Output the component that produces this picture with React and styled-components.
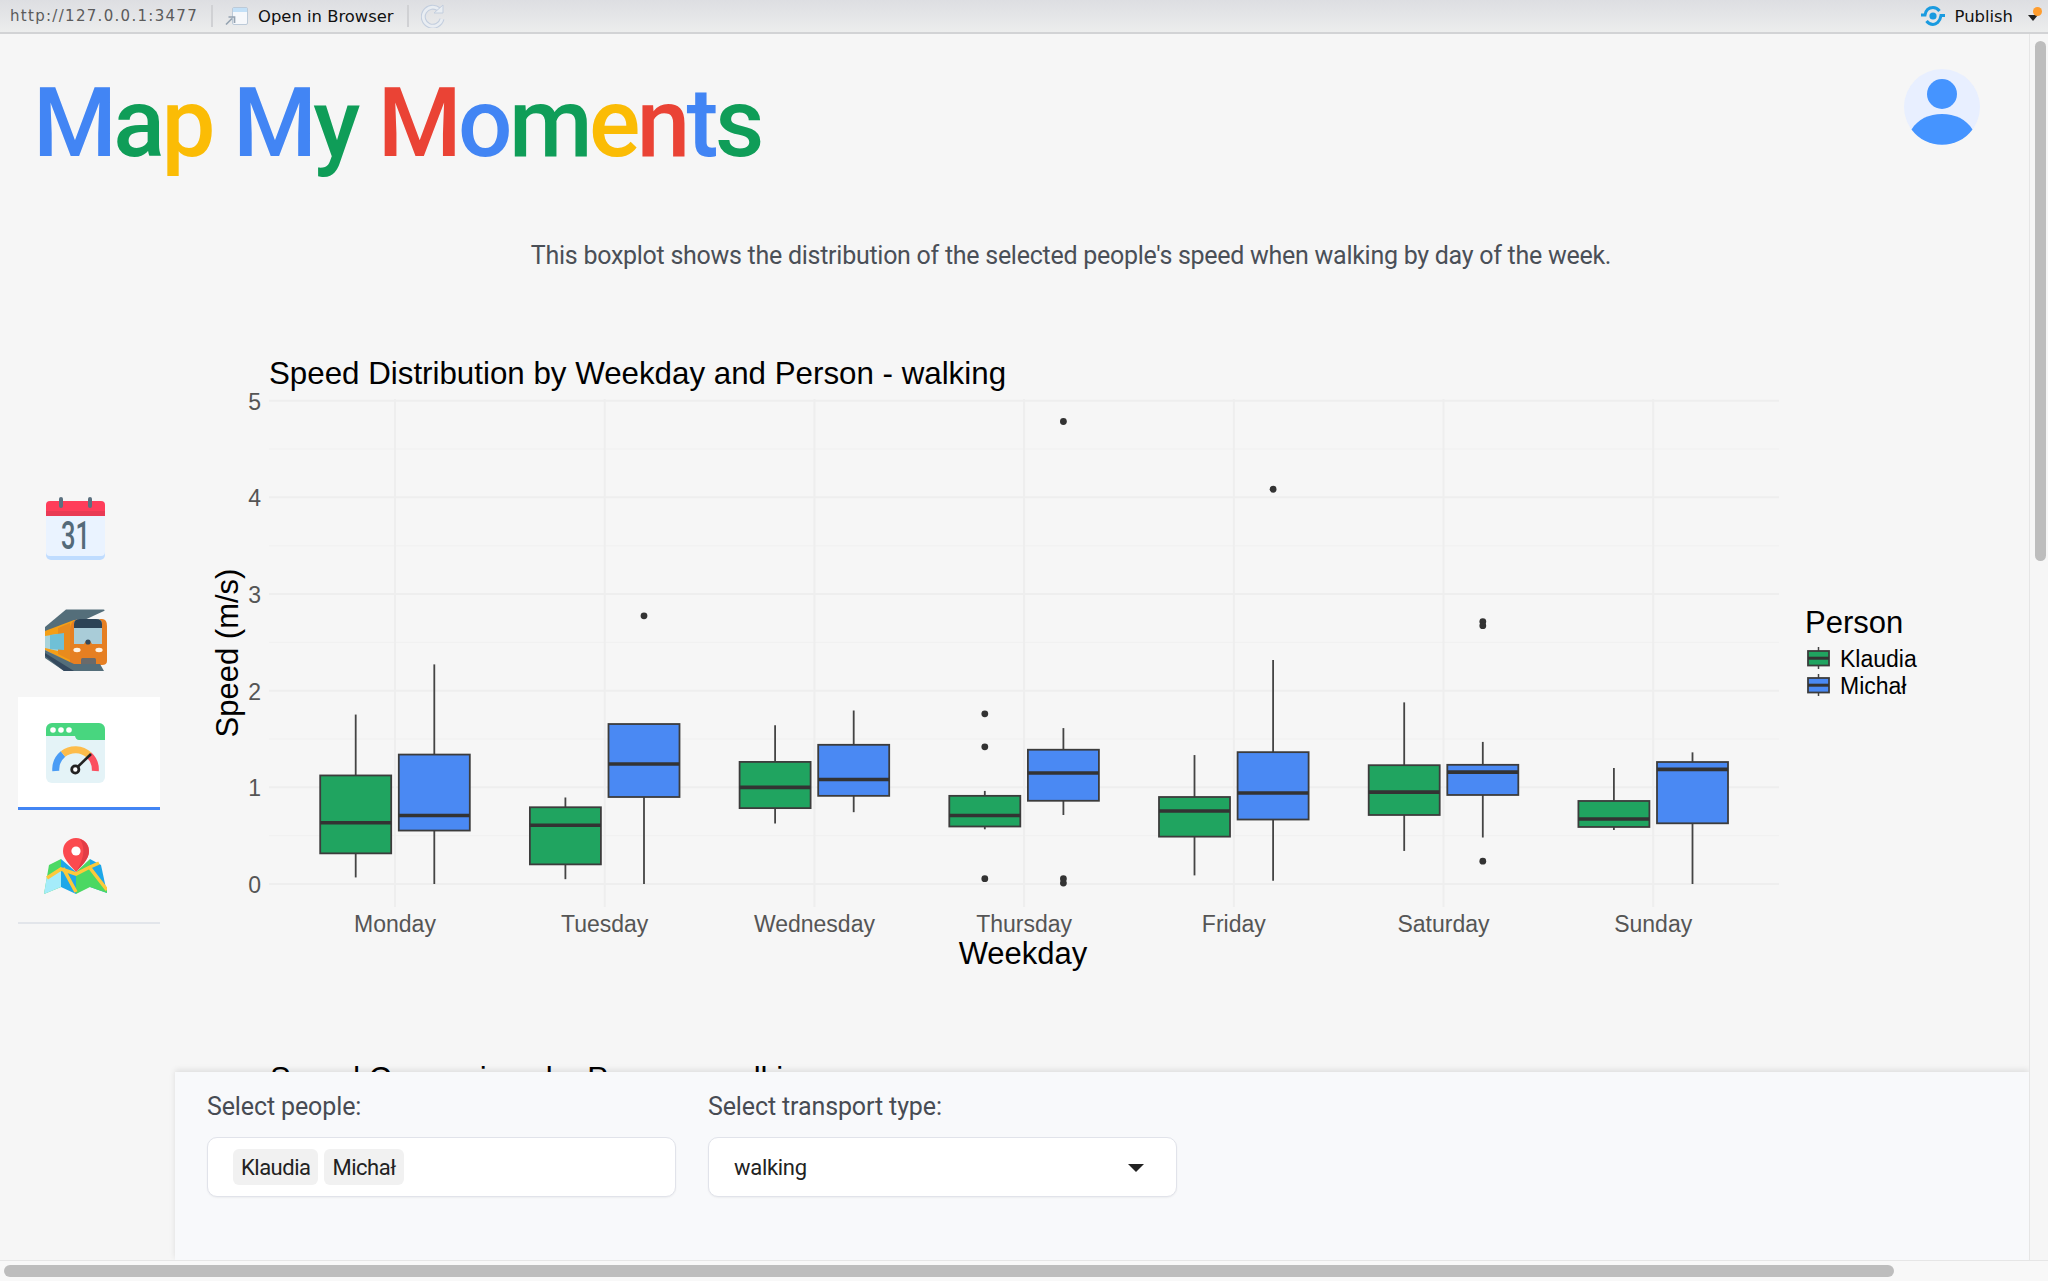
import React from 'react';
import styled, { createGlobalStyle } from 'styled-components';

const GlobalStyle = createGlobalStyle`
  html, body {
    margin: 0;
    padding: 0;
    background: #f6f6f6;
    overflow: hidden;
  }
`;

const BLUE = '#4285f4';
const GREEN = '#0f9d58';
const YELLOW = '#fbbc05';
const RED = '#ea4335';

const TITLE_WORDS = [
  [['M', BLUE], ['a', GREEN], ['p', YELLOW]],
  [['M', BLUE], ['y', GREEN]],
  [['M', RED], ['o', BLUE], ['m', GREEN], ['e', YELLOW], ['n', RED], ['t', BLUE], ['s', GREEN]],
];

// speed values: top whisker, q3, median, q1, bottom whisker, outliers
const DAYS = [
  { name: 'Monday', k: [1.753, 1.123, 0.633, 0.317, 0.068], m: [2.272, 1.339, 0.709, 0.553, 0] },
  { name: 'Tuesday', k: [0.895, 0.794, 0.608, 0.203, 0.05], m: [1.655, 1.655, 1.242, 0.9, 0, [2.774]] },
  { name: 'Wednesday', k: [1.643, 1.263, 1.0, 0.785, 0.625], m: [1.795, 1.44, 1.081, 0.912, 0.743] },
  { name: 'Thursday', k: [0.963, 0.912, 0.709, 0.595, 0.566, [1.761, 1.419, 0.055]], m: [1.613, 1.389, 1.149, 0.861, 0.714, [4.785, 0.055, 0.01]] },
  { name: 'Friday', k: [1.334, 0.9, 0.756, 0.49, 0.089], m: [2.318, 1.364, 0.942, 0.667, 0.034, [4.084]] },
  { name: 'Saturday', k: [1.879, 1.229, 0.95, 0.714, 0.342], m: [1.47, 1.233, 1.157, 0.921, 0.481, [2.715, 2.673, 0.236]] },
  { name: 'Sunday', k: [1.2, 0.859, 0.672, 0.59, 0.559], m: [1.362, 1.262, 1.186, 0.628, 0] },
];

// chart svg starts at page x=200, y=350
const PLOT = { left: 69, right: 1579, top: 49, bottom: 557, zero: 534, unit: 96.66, first: 195, step: 209.7 };
const toY = v => PLOT.zero - v * PLOT.unit;

const BoxGlyph = ({ cx, values, fill }) => {
  const [hi, q3, med, q1, lo, outliers = []] = values;
  return (
    <g>
      <line x1={cx} x2={cx} y1={toY(hi)} y2={toY(q3)} stroke="#444" strokeWidth="1.8" />
      <line x1={cx} x2={cx} y1={toY(q1)} y2={toY(lo)} stroke="#444" strokeWidth="1.8" />
      <rect x={cx - 35.5} y={toY(q3)} width="71" height={toY(q1) - toY(q3)} fill={fill} stroke="#3c3c3c" strokeWidth="1.8" />
      <line x1={cx - 35.5} x2={cx + 35.5} y1={toY(med)} y2={toY(med)} stroke="#333" strokeWidth="3.6" />
      {outliers.map(v => <circle key={v} cx={cx} cy={toY(v)} r="3.4" fill="#333" />)}
    </g>
  );
};

const LegendKey = ({ y, fill }) => (
  <g>
    <line x1="618.5" x2="618.5" y1={y - 4} y2={y + 18} stroke="#444" strokeWidth="1.5" />
    <rect x="608" y={y} width="21" height="14.5" fill={fill} stroke="#3c3c3c" strokeWidth="1.8" />
    <line x1="608" x2="629" y1={y + 7.2} y2={y + 7.2} stroke="#333" strokeWidth="3" />
  </g>
);

const BoxPlot = () => (
  <ChartSvg viewBox="0 0 1600 640" width="1600" height="640">
    <ChartTitle x="69" y="33.5">Speed Distribution by Weekday and Person - walking</ChartTitle>
    {[0.5, 1.5, 2.5, 3.5, 4.5].map(v => (
      <line key={v} x1={PLOT.left} x2={PLOT.right} y1={toY(v)} y2={toY(v)} stroke="#f0f0f0" strokeWidth="1" />
    ))}
    {[0, 1, 2, 3, 4, 5].map(v => (
      <g key={v}>
        <line x1={PLOT.left} x2={PLOT.right} y1={toY(v)} y2={toY(v)} stroke="#eeeeee" strokeWidth="2" />
        <TickText x="61" y={toY(v) + 9} textAnchor="end">{v}</TickText>
      </g>
    ))}
    {DAYS.map((d, i) => (
      <line key={d.name} x1={PLOT.first + i * PLOT.step} x2={PLOT.first + i * PLOT.step} y1={PLOT.top} y2={PLOT.bottom} stroke="#eeeeee" strokeWidth="2" />
    ))}
    {DAYS.map((d, i) => {
      const cx = PLOT.first + i * PLOT.step;
      return (
        <g key={d.name}>
          <BoxGlyph cx={cx - 39.3} values={d.k} fill="#20a460" />
          <BoxGlyph cx={cx + 39.3} values={d.m} fill="#4a89f3" />
          <TickText x={cx} y="582" textAnchor="middle">{d.name}</TickText>
        </g>
      );
    })}
    <AxisLabel x="823" y="613.5" textAnchor="middle">Weekday</AxisLabel>
    <AxisLabel transform="translate(38 303) rotate(-90)" textAnchor="middle">Speed (m/s)</AxisLabel>
  </ChartSvg>
);

const Legend = () => (
  <LegendSvg viewBox="600 0 220 104" width="220" height="104">
    <AxisLabel x="605" y="37">Person</AxisLabel>
    <LegendKey y={55} fill="#20a460" />
    <LegendText x="640" y="71">Klaudia</LegendText>
    <LegendKey y={82} fill="#4a89f3" />
    <LegendText x="640" y="98">Michał</LegendText>
  </LegendSvg>
);

const CalendarIcon = () => (
  <svg width="59" height="63" viewBox="0 0 59 63">
    <rect x="0" y="4" width="59" height="59" rx="5" fill="#bfdcff" />
    <rect x="0" y="4" width="59" height="55" rx="4" fill="#eaf3ff" />
    <path d="M0 19V8a4 4 0 0 1 4-4h51a4 4 0 0 1 4 4v11z" fill="#ff3d5a" />
    <rect x="0" y="14" width="59" height="5" fill="#e93a55" />
    <rect x="13" y="0" width="4" height="11" rx="2" fill="#5b7180" />
    <rect x="42" y="0" width="4" height="11" rx="2" fill="#5b7180" />
    <CalendarDay x="15" y="51.7" textLength="29" lengthAdjust="spacingAndGlyphs">31</CalendarDay>
  </svg>
);

const TrainIcon = () => (
  <svg width="63" height="63" viewBox="0 0 63 63">
    <path d="M1 21L1 18L22 0.5H59.5Q61.5 1 60 2L36 13L1 24z" fill="#546e7a" />
    <path d="M1 22L30 11H45V56H30L1 41z" fill="#f59f16" />
    <path d="M14 19L26 14V51L14 45z" fill="#e88b1d" />
    <path d="M1 27L14 25V42L1 39z" fill="#a8d4dc" />
    <path d="M6 26L20 24V41L6 40z" fill="#6fc0d6" />
    <path d="M26 22Q26 10 36 10H58Q63 10 63 17V52Q63 56 58 56H30Q26 56 26 52z" fill="#e67f22" />
    <path d="M30 35V15Q30 10 36 10H53Q58 10 58 15V35L48 35Q44 27 40 35z" fill="#a9ccd8" />
    <path d="M30 19V15Q30 10 36 10H52Q58 10 58 15V19z" fill="#2c4356" />
    <circle cx="44" cy="33" r="2.6" fill="#33495c" />
    <ellipse cx="33" cy="41" rx="3.6" ry="2.2" fill="#fff3e5" />
    <ellipse cx="55" cy="41" rx="3.6" ry="2.2" fill="#fff3e5" />
    <rect x="37" y="49" width="15" height="8" rx="1.5" fill="#6a6a6a" />
    <path d="M1 41L30 55H56L60 62H20L1 49z" fill="#546e7a" />
    <path d="M1 47L20 62H30L1 44z" fill="#34495e" />
  </svg>
);

const SpeedIcon = () => (
  <svg width="59" height="60" viewBox="0 0 59 60">
    <rect x="0" y="0" width="59" height="60" rx="6" fill="#e4f3f7" />
    <path d="M0 13V6a6 6 0 0 1 6-6h47a6 6 0 0 1 6 6v11H33q-3 0-4-4z" fill="#48d67f" />
    <circle cx="7" cy="7" r="2.8" fill="#fff" />
    <circle cx="15" cy="7" r="2.8" fill="#fff" />
    <circle cx="23" cy="7" r="2.8" fill="#fff" />
    <path d="M9.8 48A20 20 0 0 1 17 31" fill="none" stroke="#4a9cf5" strokeWidth="7" />
    <path d="M17 31A20 20 0 0 1 43 32" fill="none" stroke="#fdbc4b" strokeWidth="7" />
    <path d="M43 32A20 20 0 0 1 49.3 48" fill="none" stroke="#fb4f5f" strokeWidth="7" />
    <path d="M29.5 46L45 31" stroke="#222" strokeWidth="2.6" />
    <circle cx="29.3" cy="46.5" r="3.6" fill="#fff" stroke="#222" strokeWidth="2.8" />
  </svg>
);

const MapIcon = () => (
  <svg width="63" height="57" viewBox="0 0 63 57">
    <path d="M0 56L5 27L17 21V49z" fill="#4cd964" />
    <path d="M0 56L3 38L17 33V49z" fill="#a5ecfa" />
    <path d="M17 21L32 34V56L17 49z" fill="#1ea7e8" />
    <path d="M32 34L46 21V49L32 56z" fill="#4bd863" />
    <path d="M46 21L57 27L63 55L46 49z" fill="#1ea7e8" />
    <path d="M46 30L63 52V55L46 49z" fill="#4bd863" />
    <path d="M3 40L17 31L32 36L46 29L55 25" fill="none" stroke="#fdc93a" strokeWidth="3.5" />
    <path d="M19 30L32 54M46 30L63 52" fill="none" stroke="#fdc93a" strokeWidth="3.5" />
    <path d="M32 34C24 25 19 20 19 13a13 13 0 0 1 26 0C45 20 40 25 32 34z" fill="#fb4a4f" />
    <path d="M32 34C37 28 45 22 45 13A13 13 0 0 0 36 1C43 12 38 24 32 34z" fill="#e23d46" />
    <circle cx="32" cy="13" r="4.6" fill="#fff" />
  </svg>
);

const PublishIcon = () => (
  <svg width="26" height="20" viewBox="0 0 26 20">
    <path d="M1 9H5C6 3 10 1.5 13 1.5C16 1.5 18 3 19.5 5" fill="none" stroke="#1a9be0" strokeWidth="3" />
    <path d="M25 9.5H21C20 16 16 18.5 13 18.5C10 18.5 8 17 6.5 15" fill="none" stroke="#1a9be0" strokeWidth="3" />
    <circle cx="13" cy="10" r="3.6" fill="#1a9be0" />
  </svg>
);

const BrowserIcon = () => (
  <svg width="24" height="20" viewBox="0 0 24 20">
    <rect x="7.5" y="1.5" width="15" height="17" rx="1.5" fill="#f6f8fb" stroke="#bccad8" />
    <rect x="8" y="2" width="14" height="4" fill="#c3e0f7" />
    <path d="M1 18.5L7 12.5M3.5 11H9.5V17" fill="none" stroke="#95a3b1" strokeWidth="1.7" />
  </svg>
);

const RefreshIcon = () => (
  <svg width="24" height="24" viewBox="0 0 24 24">
    <path d="M18 5.5A9.5 9.5 0 1 0 21 15" fill="none" stroke="#c3cede" strokeWidth="5" />
    <path d="M18 5.5A9.5 9.5 0 1 0 21 15" fill="none" stroke="#e9edf2" strokeWidth="2.8" />
    <path d="M13 9H22V1z" fill="#e9edf2" stroke="#c3cede" />
  </svg>
);

const TAB_ICONS = [
  { id: 'calendar', Icon: CalendarIcon },
  { id: 'train', Icon: TrainIcon },
  { id: 'speed', Icon: SpeedIcon, active: true },
  { id: 'map', Icon: MapIcon },
];

export default function App() {
  return (
    <Page>
      <GlobalStyle />
      <Toolbar>
        <UrlText>http://127.0.0.1:3477</UrlText>
        <ToolbarDivider />
        <BrowserIcon />
        <ToolbarLabel>Open in Browser</ToolbarLabel>
        <ToolbarDivider />
        <RefreshIcon />
        <ToolbarSpacer />
        <PublishIcon />
        <ToolbarLabel>Publish</ToolbarLabel>
        <PublishCaret />
      </Toolbar>
      <Viewport>
        <Header>
          <AppTitle>
            {TITLE_WORDS.map((word, i) => (
              <TitleWord key={i}>
                {word.map(([ch, color], j) => <Letter key={j} $color={color}>{ch}</Letter>)}
              </TitleWord>
            ))}
          </AppTitle>
          <Avatar viewBox="0 0 76 76" width="76" height="76">
            <circle cx="38" cy="38" r="38" fill="#e8efff" />
            <circle cx="38" cy="25" r="15" fill="#4594ff" />
            <path d="M7.5 60.5C14 50 25 45 38 45C51 45 62 50 68.5 60.5A38 38 0 0 1 7.5 60.5z" fill="#4594ff" />
          </Avatar>
        </Header>
        <Body>
          <Sidebar>
            {TAB_ICONS.map(({ id, Icon, active }) => (
              <Tab key={id} $active={active}><Icon /></Tab>
            ))}
          </Sidebar>
          <Content>
            <Lead>This boxplot shows the distribution of the selected people's speed when walking by day of the week.</Lead>
            <ChartRow>
              <BoxPlot />
              <Legend />
            </ChartRow>
            <NextChartTitle>Speed Comparison by Person - walking</NextChartTitle>
          </Content>
        </Body>
        <FilterPanel>
          <Field>
            <FieldLabel>Select people:</FieldLabel>
            <FieldBox>
              <Chip>Klaudia</Chip>
              <Chip>Michał</Chip>
            </FieldBox>
          </Field>
          <Field>
            <FieldLabel>Select transport type:</FieldLabel>
            <FieldBox>
              <SelectValue>walking</SelectValue>
              <SelectCaret />
            </FieldBox>
          </Field>
        </FilterPanel>
        <VerticalScrollbar><VerticalThumb /></VerticalScrollbar>
        <HorizontalScrollbar><HorizontalThumb /></HorizontalScrollbar>
      </Viewport>
    </Page>
  );
}

const Page = styled.div`
  width: 2048px;
  height: 1281px;
  display: flex;
  flex-direction: column;
  overflow: hidden;
  background: #f6f6f6;
  font-family: Roboto, "Liberation Sans", sans-serif;
`;

const Toolbar = styled.div`
  height: 34px;
  box-sizing: border-box;
  flex: none;
  display: flex;
  align-items: center;
  padding: 0 6px 0 10px;
  gap: 9px;
  background: linear-gradient(#dddee2, #eceded);
  border-bottom: 2px solid #d2d3d5;
  font-family: "DejaVu Sans", sans-serif;
`;

const UrlText = styled.span`
  font-size: 15px;
  letter-spacing: 1.3px;
  color: #5b5b5b;
`;

const ToolbarDivider = styled.span`
  width: 2px;
  height: 22px;
  margin: 0 3px 0 4px;
  background: #d0d1d4;
`;

const ToolbarLabel = styled.span`
  font-size: 16.4px;
  color: #111;
`;

const ToolbarSpacer = styled.span`
  flex: 1;
`;

const PublishCaret = styled.span`
  position: relative;
  width: 0;
  height: 0;
  margin: 4px 4px 0 6px;
  border-left: 5px solid transparent;
  border-right: 5px solid transparent;
  border-top: 6px solid #222;

  &::after {
    content: '';
    position: absolute;
    left: 0;
    top: -14px;
    width: 9px;
    height: 9px;
    border-radius: 50%;
    background: #ff9d2e;
  }
`;

const Viewport = styled.div`
  position: relative;
  flex: 1;
  min-height: 0;
  overflow: hidden;
`;

const Header = styled.header`
  display: flex;
  justify-content: space-between;
  align-items: flex-start;
  padding: 35px 68px 0 33px;
  height: 149px;
  box-sizing: border-box;
`;

const AppTitle = styled.h1`
  margin: 6px 0 0;
  display: flex;
  gap: 21px;
  font-size: 96px;
  line-height: 96px;
  font-weight: 500;
  letter-spacing: -3.6px;
`;

const TitleWord = styled.span`
  display: block;
`;

const Letter = styled.span`
  color: ${p => p.$color};
`;

const Avatar = styled.svg`
  flex: none;
`;

const Body = styled.div`
  display: flex;
`;

const Sidebar = styled.nav`
  flex: none;
  width: 142px;
  margin: 289px 0 0 18px;
  align-self: flex-start;
  border-bottom: 2px solid #e2e5ea;
`;

const Tab = styled.div`
  height: 112.6px;
  display: flex;
  align-items: center;
  justify-content: center;
  box-sizing: border-box;
  padding: 3px 27px 0 0;
  background: ${p => (p.$active ? '#ffffff' : 'transparent')};
  border-bottom: 3px solid ${p => (p.$active ? BLUE : 'transparent')};
`;

const Content = styled.main`
  flex: 1;
  min-width: 0;
  padding-right: 66px;
`;

const Lead = styled.p`
  margin: 57px 0 0;
  text-align: center;
  font-size: 25px;
  line-height: 32px;
  letter-spacing: -0.27px;
  color: #4a4f57;
`;

const ChartRow = styled.div`
  display: flex;
  align-items: flex-start;
  margin: 78px 0 0 40px;
  width: 1820px;
`;

const ChartSvg = styled.svg`
  flex: none;
  display: block;
`;

const LegendSvg = styled.svg`
  flex: none;
  display: block;
  margin-top: 246px;
`;

const ChartTitle = styled.text`
  font: 31.3px "Liberation Sans", Arial, sans-serif;
  fill: #000;
`;

const TickText = styled.text`
  font: 23px "Liberation Sans", Arial, sans-serif;
  fill: #555;
`;

const AxisLabel = styled.text`
  font: 31px "Liberation Sans", Arial, sans-serif;
  fill: #000;
`;

const LegendText = styled.text`
  font: 23px "Liberation Sans", Arial, sans-serif;
  fill: #000;
`;

const CalendarDay = styled.text`
  font: 500 38px Roboto, sans-serif;
  fill: #546a79;
`;

const NextChartTitle = styled.h2`
  margin: 71px 0 0 110px;
  font: 400 31.2px "Liberation Sans", Arial, sans-serif;
  color: #000;
`;

const FilterPanel = styled.section`
  position: absolute;
  left: 175px;
  right: 19px;
  bottom: 21px;
  height: 188px;
  box-sizing: border-box;
  display: flex;
  gap: 32px;
  padding: 20px 32px 0;
  background: #f8f9fb;
  box-shadow: 0 -2px 6px rgba(0, 0, 0, 0.1);
`;

const Field = styled.div`
  width: 469px;
`;

const FieldLabel = styled.label`
  display: block;
  font-size: 25px;
  line-height: 30px;
  letter-spacing: -0.12px;
  color: #474b53;
  margin-bottom: 15px;
`;

const FieldBox = styled.div`
  position: relative;
  height: 60px;
  box-sizing: border-box;
  display: flex;
  align-items: center;
  gap: 6px;
  padding: 0 25px;
  background: #fff;
  border: 1.5px solid #e1e3ea;
  border-radius: 10px;
  box-shadow: 0 1px 2px rgba(0, 0, 0, 0.05);
`;

const Chip = styled.span`
  height: 36px;
  padding: 1px 8px 0;
  box-sizing: border-box;
  display: flex;
  align-items: center;
  border-radius: 6px;
  background: #f1f1f1;
  font-size: 22px;
  letter-spacing: -0.5px;
  color: #222;
`;

const SelectValue = styled.span`
  font-size: 22px;
  letter-spacing: -0.3px;
  padding-top: 1px;
  color: #222;
`;

const SelectCaret = styled.span`
  position: absolute;
  right: 32px;
  top: 26px;
  border-left: 8px solid transparent;
  border-right: 8px solid transparent;
  border-top: 8px solid #222;
`;

const VerticalScrollbar = styled.div`
  position: absolute;
  top: 0;
  right: 0;
  bottom: 0;
  width: 19px;
  background: #f6f6f6;
  border-left: 1px solid #e6e6e6;
  box-sizing: border-box;
`;

const VerticalThumb = styled.div`
  position: absolute;
  left: 5px;
  top: 7px;
  width: 11px;
  height: 520px;
  border-radius: 6px;
  background: #bdbdbd;
`;

const HorizontalScrollbar = styled.div`
  position: absolute;
  left: 0;
  right: 0;
  bottom: 0;
  height: 21px;
  background: #f8f8f8;
  border-top: 1px solid #e6e6e6;
  box-sizing: border-box;
`;

const HorizontalThumb = styled.div`
  position: absolute;
  left: 4px;
  top: 4px;
  width: 1890px;
  height: 12px;
  border-radius: 6px;
  background: #bdbdbd;
`;
